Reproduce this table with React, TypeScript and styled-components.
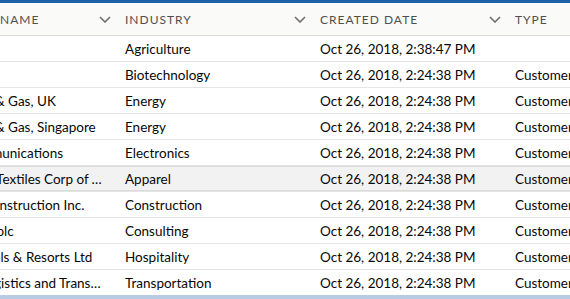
import React from 'react';
import styled, { createGlobalStyle } from 'styled-components';

interface Account {
  name: string;
  industry: string;
  created: string;
  type: string;
}

const accounts: Account[] = [
  { name: 'Acme', industry: 'Agriculture', created: 'Oct 26, 2018, 2:38:47 PM', type: '' },
  { name: 'GenePoint', industry: 'Biotechnology', created: 'Oct 26, 2018, 2:24:38 PM', type: 'Customer - Channel' },
  { name: 'United Oil & Gas, UK', industry: 'Energy', created: 'Oct 26, 2018, 2:24:38 PM', type: 'Customer - Direct' },
  { name: 'United Oil & Gas, Singapore', industry: 'Energy', created: 'Oct 26, 2018, 2:24:38 PM', type: 'Customer - Direct' },
  { name: 'Edge Communications', industry: 'Electronics', created: 'Oct 26, 2018, 2:24:38 PM', type: 'Customer - Direct' },
  { name: 'Burlington Textiles Corp of America', industry: 'Apparel', created: 'Oct 26, 2018, 2:24:38 PM', type: 'Customer - Direct' },
  { name: 'Pyramid Construction Inc.', industry: 'Construction', created: 'Oct 26, 2018, 2:24:38 PM', type: 'Customer - Channel' },
  { name: 'Dickenson plc', industry: 'Consulting', created: 'Oct 26, 2018, 2:24:38 PM', type: 'Customer - Channel' },
  { name: 'Grand Hotels & Resorts Ltd', industry: 'Hospitality', created: 'Oct 26, 2018, 2:24:38 PM', type: 'Customer - Direct' },
  { name: 'Express Logistics and Transport', industry: 'Transportation', created: 'Oct 26, 2018, 2:24:38 PM', type: 'Customer - Channel' },
];

const columns = ['Account Name', 'Industry', 'Created Date', 'Type'];

const GlobalStyle = createGlobalStyle`
  html, body {
    margin: 0;
    padding: 0;
    background: #ffffff;
    overflow: hidden;
  }
  body {
    font-family: Lato, "Open Sans", sans-serif;
    color: #080707;
  }
`;

const Page = styled.div`
  width: 570px;
  height: 299px;
  display: flex;
  flex-direction: column;
  overflow: hidden;
`;

const TopBar = styled.div`
  height: 3px;
  flex: none;
  background: #1b60a8;
`;

const Viewport = styled.div`
  flex: 1;
  overflow: hidden;
`;

// table is scrolled horizontally, so the first column starts off-screen
const Table = styled.div`
  margin-left: -77px;
  width: 790px;
`;

const HeaderRow = styled.div`
  display: grid;
  grid-template-columns: 194px 195px 195px 200px;
  height: 32px;
  background: #fafaf9;
  border-bottom: 1px solid #dddbda;
`;

const HeaderCell = styled.div`
  display: flex;
  align-items: center;
  justify-content: space-between;
  padding: 0 6px 0 8px;
  font-size: 12px;
  letter-spacing: 1px;
  text-transform: uppercase;
  color: #514f4d;
  white-space: nowrap;
`;

const Chevron = styled.svg`
  width: 12px;
  height: 7px;
  flex: none;
`;

const Row = styled.div<{ $hover?: boolean }>`
  display: grid;
  grid-template-columns: 194px 195px 195px 200px;
  height: 25px;
  align-items: center;
  border-bottom: 1px solid #e5e5e5;
  background: ${(p) => (p.$hover ? '#f3f2f2' : '#ffffff')};
  box-shadow: ${(p) => (p.$hover ? 'inset 0 1px 0 #dddbda, inset 0 -1px 0 #dddbda' : 'none')};
`;

const Cell = styled.div<{ $padRight?: number }>`
  padding: 0 ${(p) => p.$padRight ?? 8}px 0 8px;
  font-size: 13.5px;
  white-space: nowrap;
  overflow: hidden;
  text-overflow: ellipsis;
`;

const BottomBar = styled.div`
  height: 4px;
  flex: none;
  background: #b7cbe4;
`;

const ChevronIcon = () => (
  <Chevron viewBox="0 0 12 7">
    <polyline points="1,1 6,6 11,1" fill="none" stroke="#706e6b" strokeWidth="1.6" />
  </Chevron>
);

export default function App() {
  return (
    <>
      <GlobalStyle />
      <Page>
        <TopBar />
        <Viewport>
          <Table>
            <HeaderRow>
              {columns.map((c) => (
                <HeaderCell key={c}>
                  <span>{c}</span>
                  <ChevronIcon />
                </HeaderCell>
              ))}
            </HeaderRow>
            {accounts.map((a, i) => (
              <Row key={a.name} $hover={i === 5}>
                <Cell $padRight={10}>{a.name}</Cell>
                <Cell>{a.industry}</Cell>
                <Cell>{a.created}</Cell>
                <Cell>{a.type}</Cell>
              </Row>
            ))}
          </Table>
        </Viewport>
        <BottomBar />
      </Page>
    </>
  );
}
